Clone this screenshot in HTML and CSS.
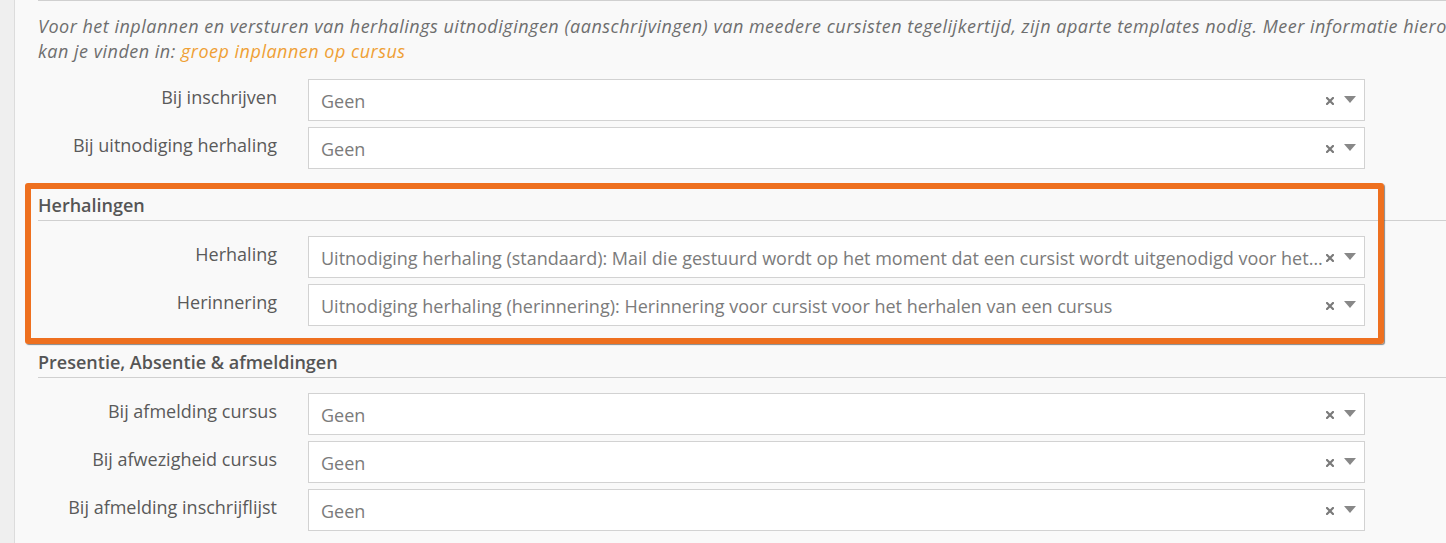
FILE: index.html
```html
<!DOCTYPE html>
<html lang="nl">
<head>
<meta charset="utf-8">
<title>Templates</title>
<link rel="stylesheet" href="styles.css">
</head>
<body>
<div class="side"></div>
<main class="panel">
  <div class="content">
    <div class="prev-rule"></div>
    <p class="intro">Voor het inplannen en versturen van herhalings uitnodigingen (aanschrijvingen) van meedere cursisten tegelijkertijd, zijn aparte templates nodig. Meer informatie hierover kan je vinden in: <a href="#" class="link">groep inplannen op cursus</a></p>

    <div class="row">
      <label class="lbl">Bij inschrijven</label>
      <div class="select"><span class="val">Geen</span><span class="clear"><svg width="8" height="8" viewBox="0 0 8 8"><path d="M1 1L7 7M7 1L1 7" stroke="#7a7a7a" stroke-width="2.2" stroke-linecap="square"/></svg></span><span class="arrow"><svg width="12" height="7" viewBox="0 0 12 7"><path d="M0 0H12L6 7Z" fill="#888"/></svg></span></div>
    </div>
    <div class="row">
      <label class="lbl">Bij uitnodiging herhaling</label>
      <div class="select"><span class="val">Geen</span><span class="clear"><svg width="8" height="8" viewBox="0 0 8 8"><path d="M1 1L7 7M7 1L1 7" stroke="#7a7a7a" stroke-width="2.2" stroke-linecap="square"/></svg></span><span class="arrow"><svg width="12" height="7" viewBox="0 0 12 7"><path d="M0 0H12L6 7Z" fill="#888"/></svg></span></div>
    </div>

    <section class="group highlighted">
      <h4 class="group-title">Herhalingen</h4>
      <div class="row">
        <label class="lbl">Herhaling</label>
        <div class="select"><span class="val">Uitnodiging herhaling (standaard): Mail die gestuurd wordt op het moment dat een cursist wordt uitgenodigd voor het herhalen van een cursus</span><span class="clear"><svg width="8" height="8" viewBox="0 0 8 8"><path d="M1 1L7 7M7 1L1 7" stroke="#7a7a7a" stroke-width="2.2" stroke-linecap="square"/></svg></span><span class="arrow"><svg width="12" height="7" viewBox="0 0 12 7"><path d="M0 0H12L6 7Z" fill="#888"/></svg></span></div>
      </div>
      <div class="row">
        <label class="lbl">Herinnering</label>
        <div class="select"><span class="val">Uitnodiging herhaling (herinnering): Herinnering voor cursist voor het herhalen van een cursus</span><span class="clear"><svg width="8" height="8" viewBox="0 0 8 8"><path d="M1 1L7 7M7 1L1 7" stroke="#7a7a7a" stroke-width="2.2" stroke-linecap="square"/></svg></span><span class="arrow"><svg width="12" height="7" viewBox="0 0 12 7"><path d="M0 0H12L6 7Z" fill="#888"/></svg></span></div>
      </div>
    </section>

    <section class="group">
      <h4 class="group-title">Presentie, Absentie &amp; afmeldingen</h4>
      <div class="row">
        <label class="lbl">Bij afmelding cursus</label>
        <div class="select"><span class="val">Geen</span><span class="clear"><svg width="8" height="8" viewBox="0 0 8 8"><path d="M1 1L7 7M7 1L1 7" stroke="#7a7a7a" stroke-width="2.2" stroke-linecap="square"/></svg></span><span class="arrow"><svg width="12" height="7" viewBox="0 0 12 7"><path d="M0 0H12L6 7Z" fill="#888"/></svg></span></div>
      </div>
      <div class="row">
        <label class="lbl">Bij afwezigheid cursus</label>
        <div class="select"><span class="val">Geen</span><span class="clear"><svg width="8" height="8" viewBox="0 0 8 8"><path d="M1 1L7 7M7 1L1 7" stroke="#7a7a7a" stroke-width="2.2" stroke-linecap="square"/></svg></span><span class="arrow"><svg width="12" height="7" viewBox="0 0 12 7"><path d="M0 0H12L6 7Z" fill="#888"/></svg></span></div>
      </div>
      <div class="row">
        <label class="lbl">Bij afmelding inschrijflijst</label>
        <div class="select"><span class="val">Geen</span><span class="clear"><svg width="8" height="8" viewBox="0 0 8 8"><path d="M1 1L7 7M7 1L1 7" stroke="#7a7a7a" stroke-width="2.2" stroke-linecap="square"/></svg></span><span class="arrow"><svg width="12" height="7" viewBox="0 0 12 7"><path d="M0 0H12L6 7Z" fill="#888"/></svg></span></div>
      </div>
    </section>
  </div>
</main>
</body>
</html>
```

FILE: styles.css
```css
html, body {
  margin: 0;
  padding: 0;
  height: 100%;
  overflow: hidden;
}

body {
  display: flex;
  background: #eeeeee;
  font-family: "Open Sans", "Noto Sans", sans-serif;
  font-size: 18px;
  color: #555;
}

.side {
  flex: 0 0 14px;
  background: #efefef;
}

.panel {
  flex: 0 0 auto;
  width: 1600px;
  background: #f9f9f9;
  border-left: 1px solid #dcdcdc;
  min-height: 100%;
}

.content {
  padding-left: 23px;
  width: 1452px;
}

.prev-rule {
  height: 0;
  border-top: 1px solid #d0d0d0;
  width: 1500px;
}

.intro {
  margin: 13px 0 15px;
  font-style: italic;
  color: #6e6e6e;
  line-height: 25px;
  letter-spacing: 0.5px;
}

.link {
  color: #efa035;
  text-decoration: none;
}

.row {
  display: grid;
  grid-template-columns: 270px 1057px;
  margin-bottom: 6px;
}

.lbl {
  text-align: right;
  padding-right: 31px;
  padding-top: 6px;
  line-height: 24px;
  color: #5a5a5a;
}

.select {
  height: 42px;
  box-sizing: border-box;
  border: 1px solid #d2d2d2;
  background: #fff;
  display: flex;
  align-items: center;
  padding: 0 8px 0 12px;
}

.val {
  flex: 1 1 auto;
  min-width: 0;
  white-space: nowrap;
  overflow: hidden;
  text-overflow: ellipsis;
  color: #7b7b7b;
  padding-top: 2px;
}

.clear {
  flex: 0 0 auto;
  display: flex;
  margin-left: 3px;
  margin-right: 10px;
  padding-top: 2px;
}

.arrow {
  flex: 0 0 auto;
  display: flex;
  padding-bottom: 2px;
}

.group {
  margin-top: 24px;
}

.group-title {
  margin: 0 0 15px;
  font-size: 18px;
  font-weight: 600;
  line-height: 24px;
  padding-bottom: 3px;
  border-bottom: 1px solid #d0d0d0;
  width: 1500px;
  color: #555;
}

.highlighted {
  position: relative;
}

.highlighted::before {
  content: "";
  position: absolute;
  top: -10px;
  left: -13px;
  width: 1359px;
  height: 161px;
  box-sizing: border-box;
  border: 6px solid #ee701f;
  border-radius: 3px;
  box-shadow: 1px 1px 1px rgba(60, 60, 60, 0.6);
  pointer-events: none;
}
```
